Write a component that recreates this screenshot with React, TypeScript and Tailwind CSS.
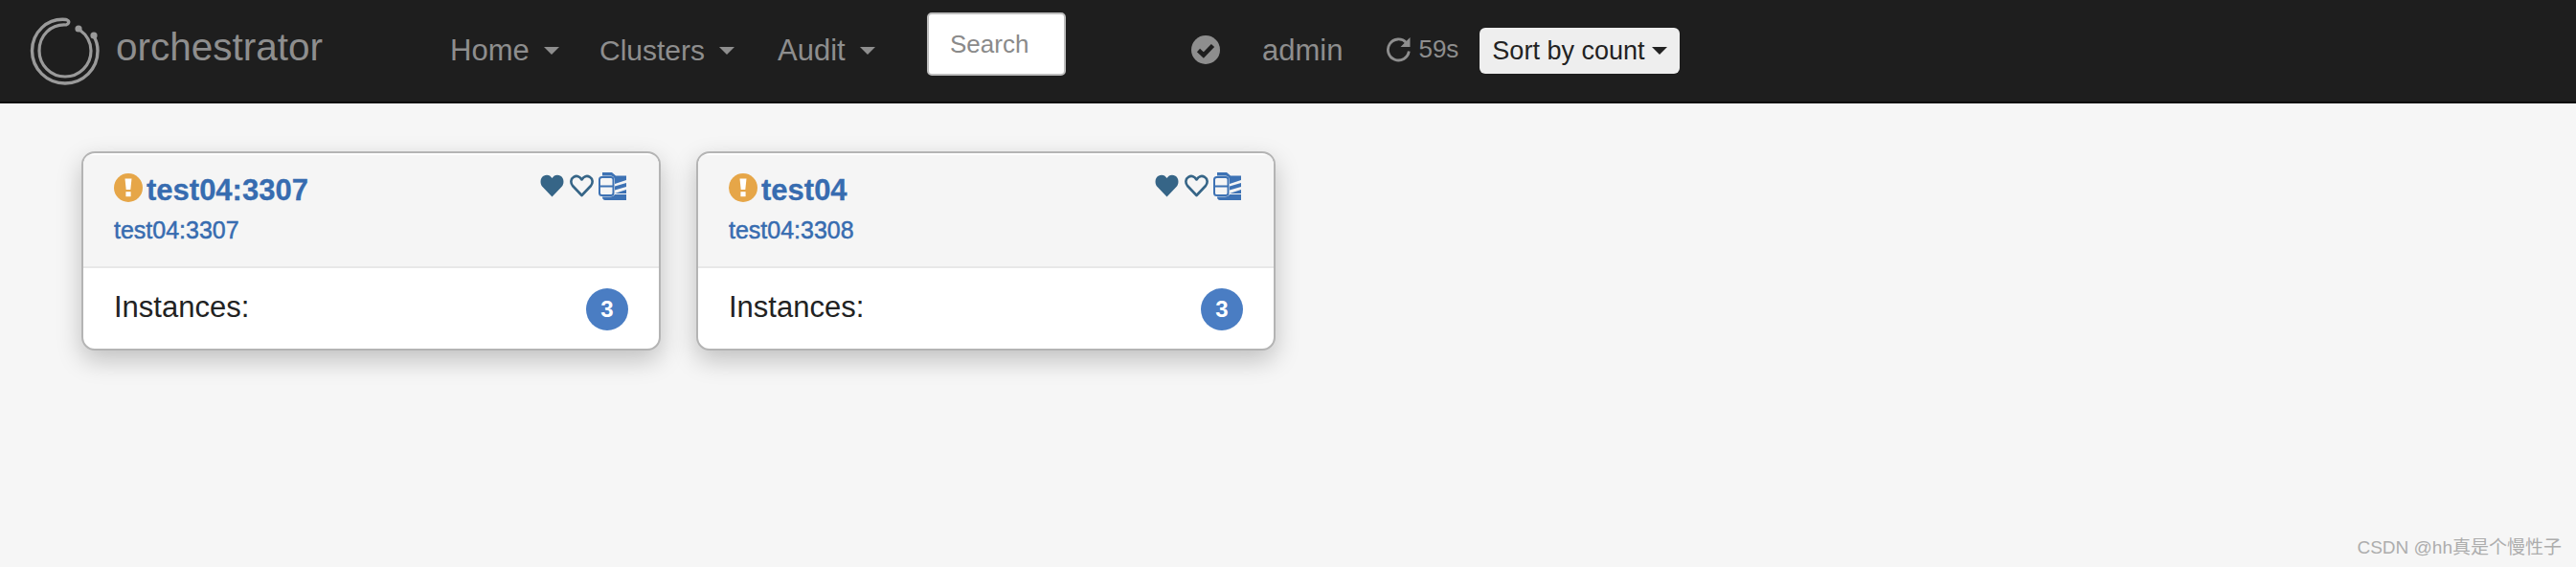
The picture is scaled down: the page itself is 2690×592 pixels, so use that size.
import React from "react";

const Caret = ({ className = "border-t-[#8e8e8e]" }: { className?: string }) => (
  <span className={`inline-block w-0 h-0 border-x-[8px] border-x-transparent border-t-[8px] ${className}`} />
);

const NavItem = ({ label, className }: { label: string; className: string }) => (
  <div className={`flex items-center gap-[15px] pb-[1px] ${className}`}>
    <span>{label}</span>
    <Caret />
  </div>
);

const Logo = () => (
  <svg width="74" height="74" viewBox="0 0 74 74" fill="none" className="shrink-0">
    <path
      d="M38 4.5 C 18 2.5 2.5 18 2.5 37 C 2.5 56 18 71 37 71 C 56 71 71 56 71 37 C 71 31 70 27 67 22"
      stroke="#9a9a9a"
      strokeWidth="3.4"
      strokeLinecap="round"
    />
    <path
      d="M39 5 C 42 6 41 9 38 10 C 22 9 10 21 10 37 C 10 52 22 64 37 64 C 52 64 64 52 64 37 C 64 28 59 20 52 15"
      stroke="#9a9a9a"
      strokeWidth="3.2"
      strokeLinecap="round"
    />
    <circle cx="51" cy="14" r="3.6" fill="#9a9a9a" />
    <circle cx="67" cy="21" r="3.6" fill="#9a9a9a" />
  </svg>
);

const HeartSolid = () => (
  <svg width="25" height="24" viewBox="0 0 25 24" className="shrink-0">
    <path
      d="M12.5 23.5 L2.5 13 C-0.5 9.5 0 4 3.5 1.8 C7 -0.3 10.5 0.8 12.5 4 C14.5 0.8 18 -0.3 21.5 1.8 C25 4 25.5 9.5 22.5 13 Z"
      fill="#366587"
    />
  </svg>
);

const HeartOutline = () => (
  <svg width="25" height="24" viewBox="0 0 25 24" className="shrink-0">
    <path
      d="M12.5 22 L3 12 C0.5 9 1 4.5 4 2.8 C7.2 1 10.5 2 12.5 5.5 C14.5 2 17.8 1 21 2.8 C24 4.5 24.5 9 22 12 Z"
      fill="none"
      stroke="#366587"
      strokeWidth="2.6"
      strokeLinejoin="round"
    />
  </svg>
);

const ClusterIcon = () => (
  <svg width="29" height="29" viewBox="0 0 29 29" className="shrink-0">
    <path d="M4 0 H14 L18 3.5 H29 V8 L17 12 V9 C17 5 15 3.5 12 3.5 H4 Z" fill="#3d72b4" />
    <path d="M29 11 V15 L17 18.5 V14.5 Z" fill="#3d72b4" />
    <path d="M29 18 V22 L17 22 Z" fill="#3d72b4" />
    <path d="M4 25.5 H12 C15 25.5 16 24.5 17 23 H29 V29 H7 C5 29 4 27.5 4 25.5 Z" fill="#3d72b4" />
    <rect x="1" y="5" width="14.5" height="19" rx="2.5" fill="#f5f5f5" stroke="#3d72b4" strokeWidth="2" />
    <path d="M1 14.5 H15.5" stroke="#3d72b4" strokeWidth="2" />
  </svg>
);

const Warning = () => (
  <svg width="30" height="30" viewBox="0 0 30 30" className="shrink-0">
    <circle cx="15" cy="15" r="15" fill="#e6a648" />
    <path d="M11.5 5.5 H18.5 L17.3 17 H12.7 Z" fill="#fff" />
    <rect x="12.4" y="19.2" width="5.2" height="5" fill="#fff" />
  </svg>
);

const CheckSign = () => (
  <svg width="30" height="30" viewBox="0 0 30 30" className="shrink-0">
    <circle cx="15" cy="15" r="15" fill="#8e8e8e" />
    <path d="M7.5 15.5 L12.8 20.5 L22.5 10.5" fill="none" stroke="#1e1e1e" strokeWidth="4.6" />
  </svg>
);

const Repeat = () => (
  <svg width="27" height="27" viewBox="0 0 27 27" fill="none" className="shrink-0">
    <path d="M21.5 6.5 A11 11 0 1 0 24.3 15.5" stroke="#8e8e8e" strokeWidth="2.8" />
    <path d="M25.5 1 V11 H15.5 Z" fill="#8e8e8e" />
  </svg>
);

const Card = ({ title, sub }: { title: string; sub: string }) => (
  <div className="w-[605px] h-[208px] rounded-[14px] border-2 border-[#b4b4b4] bg-white overflow-hidden shadow-[0_10px_26px_rgba(0,0,0,0.22)]">
    <div className="h-[118px] mt-[2px] bg-[#f5f5f5] border-b-2 border-[#e8e8e8] pl-[32px] pr-[34px] flex justify-between">
      <div className="flex flex-col">
        <div className="flex items-start gap-[4px] pt-[19px]">
          <Warning />
          <span className="text-[31px] leading-[36px] font-bold text-[#376cb0] [-webkit-text-stroke:0.3px_#376cb0]">{title}</span>
        </div>
        <a className="text-[25px] leading-[30px] text-[#376cb0] mt-[8px] [-webkit-text-stroke:0.5px_#376cb0]">{sub}</a>
      </div>
      <div className="flex items-start gap-[5px] pt-[18px]">
        <div className="pl-[4px] pt-[2px]"><HeartSolid /></div>
        <div className="pt-[2px] pl-[1px]"><HeartOutline /></div>
        <ClusterIcon />
      </div>
    </div>
    <div className="flex items-center justify-between pl-[32px] pr-[32px] h-[85px]">
      <span className="text-[31px] leading-[36px] text-[#222] pb-[3px]">Instances:</span>
      <span className="w-[44px] h-[44px] rounded-full bg-[#4a7dc3] text-white font-bold text-[24px] flex items-center justify-center">3</span>
    </div>
  </div>
);

export default function App() {
  return (
    <div className="relative w-[2690px] h-[592px] bg-[#f6f6f6] overflow-hidden font-['Liberation_Sans','Noto_Sans_CJK_SC',sans-serif]">
      <nav className="h-[108px] bg-[#1e1e1e] border-b-2 border-[#0b0b0b] flex items-center text-[#8e8e8e] text-[31px] leading-[36px]">
        <div className="flex items-center pl-[31px] w-[470px]">
          <Logo />
          <span className="text-[40.5px] leading-[46px] ml-[16px] pb-[8px]">orchestrator</span>
        </div>
        <NavItem label="Home" className="w-[156px]" />
        <NavItem label="Clusters" className="w-[186px] text-[30px]" />
        <NavItem label="Audit" className="w-[156px]" />
        <div className="w-[145px] h-[66px] mb-[14px] bg-white rounded-[5px] border-2 border-[#bdbdbd] flex items-center pl-[22px] text-[#8a8a8a] text-[26px]">
          Search
        </div>
        <div className="ml-[131px] mb-[2px]"><CheckSign /></div>
        <span className="ml-[44px] pb-[1px]">admin</span>
        <div className="ml-[45px] mb-[4px]"><Repeat /></div>
        <span className="ml-[7px] text-[26px] mb-[4px]">59s</span>
        <div className="ml-[22px] w-[209px] h-[48px] rounded-[6px] bg-[#eeeeee] text-[#222] text-[27px] flex items-center pl-[13px] gap-[8px]">
          <span>Sort by count</span>
          <Caret className="border-t-[#222]" />
        </div>
      </nav>
      <main className="flex gap-[37px] pt-[50px] pl-[85px]">
        <Card title="test04:3307" sub="test04:3307" />
        <Card title="test04" sub="test04:3308" />
      </main>
      <div className="absolute right-[15px] bottom-[10px] text-[19px] leading-[20px] text-[#adadad]">CSDN @hh真是个慢性子</div>
    </div>
  );
}
